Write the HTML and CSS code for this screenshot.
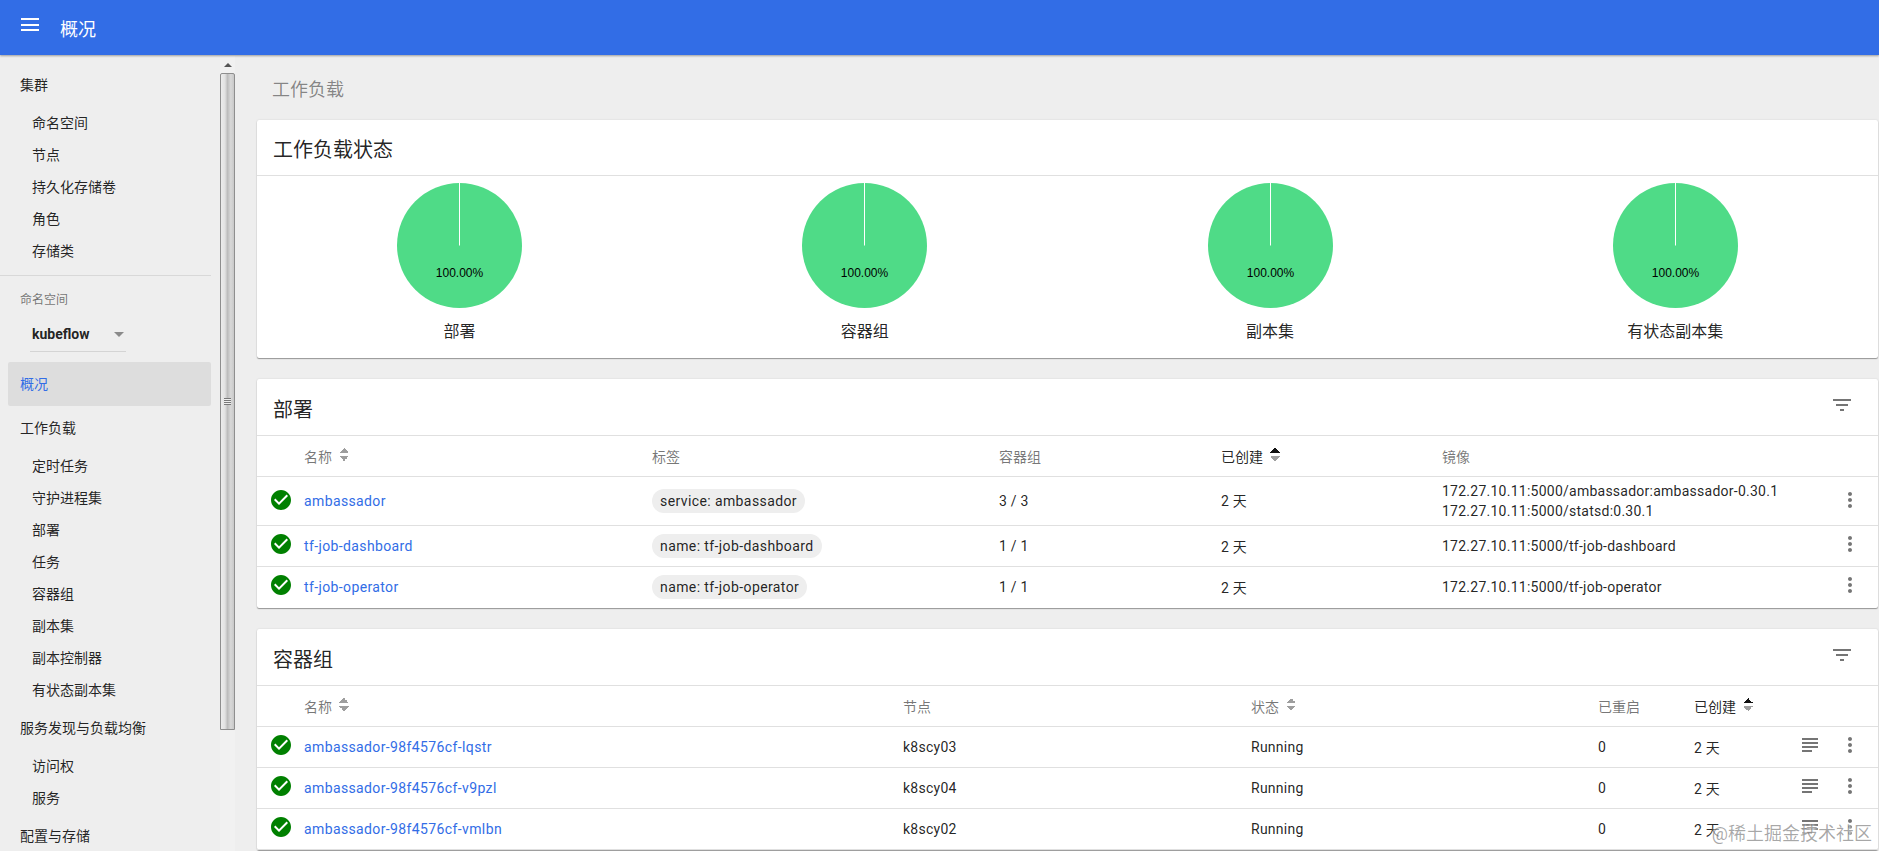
FILE: index.html
```html
<!DOCTYPE html>
<html lang="en">
<head>
  <meta charset="UTF-8" />
  <title>概况 - Kubernetes Dashboard</title>
  <link rel="stylesheet" href="styles.css">
</head>
<body>

<svg class="icon-defs" width="0" height="0">
  <symbol id="i-check" viewBox="0 0 24 24"><path d="M12 2C6.48 2 2 6.48 2 12s4.48 10 10 10 10-4.48 10-10S17.52 2 12 2zm-2 15l-5-5 1.41-1.41L10 14.17l7.59-7.59L19 8l-9 9z"/></symbol>
  <symbol id="i-more" viewBox="0 0 24 24"><path d="M12 8c1.1 0 2-.9 2-2s-.9-2-2-2-2 .9-2 2 .9 2 2 2zm0 2c-1.1 0-2 .9-2 2s.9 2 2 2 2-.9 2-2-.9-2-2-2zm0 6c-1.1 0-2 .9-2 2s.9 2 2 2 2-.9 2-2-.9-2-2-2z"/></symbol>
  <symbol id="i-filter" viewBox="0 0 24 24"><path d="M10 18h4v-2h-4v2zM3 6v2h18V6H3zm3 7h12v-2H6v2z"/></symbol>
  <symbol id="i-logs" viewBox="0 0 24 24"><path d="M14 17H4v2h10v-2zm6-8H4v2h16V9zM4 15h16v-2H4v2zM4 5v2h16V5H4z"/></symbol>
  <symbol id="i-pie" viewBox="0 0 125 125">
    <circle cx="62.5" cy="62.5" r="62.5" fill="#4fdb87"/>
    <rect x="62" y="0" width="1" height="62.5" fill="#fff"/>
  </symbol>
</svg>

<header class="toolbar">
  <button class="menu-btn"><span></span><span></span><span></span></button>
  <h1>概况</h1>
</header>

<div class="shell">
  <nav class="sidebar">
    <div class="nav-head">集群</div>
    <a class="nav-item">命名空间</a>
    <a class="nav-item">节点</a>
    <a class="nav-item">持久化存储卷</a>
    <a class="nav-item">角色</a>
    <a class="nav-item">存储类</a>

    <hr class="nav-divider">
    <div class="ns-label">命名空间</div>
    <div class="ns-select"><b>kubeflow</b><i class="ns-arrow"></i></div>

    <div class="nav-head nav-active">概况</div>

    <div class="nav-head">工作负载</div>
    <a class="nav-item">定时任务</a>
    <a class="nav-item">守护进程集</a>
    <a class="nav-item">部署</a>
    <a class="nav-item">任务</a>
    <a class="nav-item">容器组</a>
    <a class="nav-item">副本集</a>
    <a class="nav-item">副本控制器</a>
    <a class="nav-item">有状态副本集</a>

    <div class="nav-head">服务发现与负载均衡</div>
    <a class="nav-item">访问权</a>
    <a class="nav-item">服务</a>

    <div class="nav-head">配置与存储</div>
  </nav>

  <div class="scrollbar">
    <div class="scroll-up"><i></i></div>
    <div class="scroll-thumb"><i></i></div>
  </div>

  <main class="content">
    <div class="page-title">工作负载</div>

    <section class="card">
      <div class="card-head"><h2>工作负载状态</h2></div>
      <div class="pies">
        <div class="pie">
          <svg width="125" height="125"><use href="#i-pie"/><text x="62.5" y="94" text-anchor="middle">100.00%</text></svg>
          <div class="pie-label">部署</div>
        </div>
        <div class="pie">
          <svg width="125" height="125"><use href="#i-pie"/><text x="62.5" y="94" text-anchor="middle">100.00%</text></svg>
          <div class="pie-label">容器组</div>
        </div>
        <div class="pie">
          <svg width="125" height="125"><use href="#i-pie"/><text x="62.5" y="94" text-anchor="middle">100.00%</text></svg>
          <div class="pie-label">副本集</div>
        </div>
        <div class="pie">
          <svg width="125" height="125"><use href="#i-pie"/><text x="62.5" y="94" text-anchor="middle">100.00%</text></svg>
          <div class="pie-label">有状态副本集</div>
        </div>
      </div>
    </section>

    <section class="card">
      <div class="card-head card-head-list">
        <h2>部署</h2>
        <svg class="icon filter-icon"><use href="#i-filter"/></svg>
      </div>
      <table class="list">
        <colgroup>
          <col class="c-status"><col class="c-348"><col class="c-347"><col class="c-222"><col class="c-221"><col><col class="c-actions-one">
        </colgroup>
        <thead>
          <tr>
            <th></th>
            <th>名称 <span class="sort"></span></th>
            <th>标签</th>
            <th>容器组</th>
            <th class="sorted">已创建 <span class="sort sort-active"></span></th>
            <th>镜像</th>
            <th></th>
          </tr>
        </thead>
        <tbody>
          <tr class="tall">
            <td><svg class="icon check"><use href="#i-check"/></svg></td>
            <td><a>ambassador</a></td>
            <td><span class="chip">service: ambassador</span></td>
            <td>3 / 3</td>
            <td>2 天</td>
            <td>172.27.10.11:5000/ambassador:ambassador-0.30.1<br>172.27.10.11:5000/statsd:0.30.1</td>
            <td class="actions"><svg class="icon"><use href="#i-more"/></svg></td>
          </tr>
          <tr>
            <td><svg class="icon check"><use href="#i-check"/></svg></td>
            <td><a>tf-job-dashboard</a></td>
            <td><span class="chip">name: tf-job-dashboard</span></td>
            <td>1 / 1</td>
            <td>2 天</td>
            <td>172.27.10.11:5000/tf-job-dashboard</td>
            <td class="actions"><svg class="icon"><use href="#i-more"/></svg></td>
          </tr>
          <tr>
            <td><svg class="icon check"><use href="#i-check"/></svg></td>
            <td><a>tf-job-operator</a></td>
            <td><span class="chip">name: tf-job-operator</span></td>
            <td>1 / 1</td>
            <td>2 天</td>
            <td>172.27.10.11:5000/tf-job-operator</td>
            <td class="actions"><svg class="icon"><use href="#i-more"/></svg></td>
          </tr>
        </tbody>
      </table>
    </section>

    <section class="card">
      <div class="card-head card-head-list">
        <h2>容器组</h2>
        <svg class="icon filter-icon"><use href="#i-filter"/></svg>
      </div>
      <table class="list list-pods">
        <colgroup>
          <col class="c-status"><col class="c-599"><col class="c-348"><col class="c-347"><col class="c-96"><col><col class="c-actions-two">
        </colgroup>
        <thead>
          <tr>
            <th></th>
            <th>名称 <span class="sort"></span></th>
            <th>节点</th>
            <th>状态 <span class="sort"></span></th>
            <th>已重启</th>
            <th class="sorted">已创建 <span class="sort sort-active"></span></th>
            <th></th>
          </tr>
        </thead>
        <tbody>
          <tr>
            <td><svg class="icon check"><use href="#i-check"/></svg></td>
            <td><a>ambassador-98f4576cf-lqstr</a></td>
            <td>k8scy03</td>
            <td>Running</td>
            <td>0</td>
            <td>2 天</td>
            <td class="actions"><svg class="icon"><use href="#i-logs"/></svg><svg class="icon"><use href="#i-more"/></svg></td>
          </tr>
          <tr>
            <td><svg class="icon check"><use href="#i-check"/></svg></td>
            <td><a>ambassador-98f4576cf-v9pzl</a></td>
            <td>k8scy04</td>
            <td>Running</td>
            <td>0</td>
            <td>2 天</td>
            <td class="actions"><svg class="icon"><use href="#i-logs"/></svg><svg class="icon"><use href="#i-more"/></svg></td>
          </tr>
          <tr>
            <td><svg class="icon check"><use href="#i-check"/></svg></td>
            <td><a>ambassador-98f4576cf-vmlbn</a></td>
            <td>k8scy02</td>
            <td>Running</td>
            <td>0</td>
            <td>2 天</td>
            <td class="actions"><svg class="icon"><use href="#i-logs"/></svg><svg class="icon"><use href="#i-more"/></svg></td>
          </tr>
        </tbody>
      </table>
    </section>
  </main>
</div>

<div class="watermark">@稀土掘金技术社区</div>

</body>
</html>
```

FILE: styles.css
```css
html, body {
  height: 100%;
}

body {
  margin: 0;
  display: flex;
  flex-direction: column;
  overflow: hidden;
  background: #eee;
  color: rgba(0,0,0,0.87);
  font-family: Roboto, "Noto Sans CJK SC", sans-serif;
  font-size: 14px;
}

.icon-defs {
  position: absolute;
}

/* top bar */
.toolbar {
  flex: none;
  height: 55px;
  display: flex;
  align-items: center;
  background: #326de6;
  color: white;
  box-shadow: 0 1px 2px rgba(0,0,0,0.35);
  position: relative;
  z-index: 2;
}

.toolbar h1 {
  margin: 0 0 0 21px;
  font-size: 18px;
  font-weight: 400;
}

.menu-btn {
  display: flex;
  flex-direction: column;
  gap: 3.5px;
  width: 18px;
  margin: -6px 0 0 21px;
  padding: 0;
  border: none;
  background: none;
}

.menu-btn span {
  height: 2px;
  background: white;
}

.shell {
  flex: 1;
  min-height: 0;
  display: flex;
  margin-top: 1px;
}

/* side navigation */
.sidebar {
  flex: none;
  width: 220px;
  padding-top: 7px;
  overflow: hidden;
  box-sizing: border-box;
}

.nav-head {
  height: 44px;
  line-height: 44px;
  margin-right: 9px;
  padding-left: 20px;
}

.nav-item {
  display: block;
  height: 32px;
  line-height: 32px;
  padding-left: 32px;
}

.nav-divider {
  height: 1px;
  margin: 8px 9px 0 0;
  border: none;
  background: #d8d8d8;
}

.ns-label {
  margin: 15px 0 0 20px;
  height: 18px;
  line-height: 18px;
  font-size: 12px;
  color: rgba(0,0,0,0.54);
}

.ns-select {
  display: flex;
  align-items: center;
  justify-content: space-between;
  box-sizing: border-box;
  width: 96px;
  height: 35px;
  margin: 8px 0 10px 30px;
  padding: 0 2px;
  border-bottom: 1px solid #d4d4d4;
}

.ns-arrow {
  width: 0;
  height: 0;
  border: 5px solid transparent;
  border-top-color: #8a8a8a;
  border-bottom: none;
}

.nav-active {
  margin-left: 8px;
  padding-left: 12px;
  background: #ddd;
  border-radius: 2px;
  color: #326de6;
}

/* fake windows scrollbar */
.scrollbar {
  flex: none;
  width: 15px;
  background: #f1f1f1;
}

.scroll-up {
  height: 17px;
  display: flex;
  align-items: center;
  justify-content: center;
}

.scroll-up i {
  width: 0;
  height: 0;
  border: 4px solid transparent;
  border-bottom: 4px solid #555;
  border-top: none;
}

.scroll-thumb {
  height: 655px;
  display: flex;
  align-items: center;
  justify-content: center;
  border: 1px solid #8e8e8e;
  border-radius: 2px 2px 0 0;
  box-sizing: content-box;
  width: 13px;
  background: linear-gradient(to right, #ececec 0%, #e2e2e2 30%, #bdbdbd 50%, #d8d8d8 75%, #c8c8c8 100%);
}

.scroll-thumb i {
  width: 7px;
  height: 5px;
  margin-top: -1px;
  border-top: 1px solid #777;
  border-bottom: 1px solid #777;
  background: linear-gradient(#eee 0 1px, #777 1px 2px, #eee 2px 3px, #777 3px 4px, #eee 4px);
}

/* main column */
.content {
  flex: 1;
  min-width: 0;
  padding: 0 1px 0 22px;
  overflow: hidden;
}

.page-title {
  height: 24px;
  line-height: 24px;
  margin: 22px 0 18px 15px;
  font-size: 18px;
  color: rgba(0,0,0,0.45);
}

.card {
  margin-bottom: 21px;
  background: white;
  border-radius: 2px;
  box-shadow: 0 1px 1px rgba(0,0,0,0.35), 0 0 2px rgba(0,0,0,0.12);
}

.card-head {
  box-sizing: border-box;
  height: 56px;
  display: flex;
  align-items: center;
  justify-content: space-between;
  padding: 0 24px 0 16px;
  border-bottom: 1px solid #e0e0e0;
}

.card-head-list {
  height: 57px;
}

.card-head h2 {
  margin: 2px 0 0;
  font-size: 20px;
  font-weight: 400;
}

.filter-icon {
  margin-top: -4px;
}

.icon {
  width: 24px;
  height: 24px;
  fill: rgba(0,0,0,0.54);
  display: inline-block;
  vertical-align: middle;
}

/* status pies */
.pies {
  display: grid;
  grid-template-columns: repeat(4, 1fr);
  height: 182px;
}

.pie {
  display: flex;
  flex-direction: column;
  align-items: center;
  padding-top: 7px;
}

.pie svg {
  display: block;
}

.pie text {
  font-family: "Liberation Sans", Arial, sans-serif;
  font-size: 12px;
  fill: #000;
}

.pie-label {
  margin-top: 12px;
  font-size: 16px;
  line-height: 24px;
}

/* tables */
.list {
  width: 100%;
  table-layout: fixed;
  border-collapse: separate;
  border-spacing: 0;
}

.c-status { width: 47px; }
.c-96 { width: 96px; }
.c-221 { width: 221px; }
.c-222 { width: 222px; }
.c-347 { width: 347px; }
.c-348 { width: 348px; }
.c-599 { width: 599px; }
.c-actions-one { width: 58px; }
.c-actions-two { width: 98px; }

.list th,
.list td {
  padding: 0;
  height: 40px;
  border-bottom: 1px solid #e0e0e0;
  text-align: left;
  font-weight: 400;
  white-space: nowrap;
}

.list td {
  letter-spacing: 0.25px;
}

.list th {
  color: rgba(0,0,0,0.54);
}

.list th.sorted {
  color: rgba(0,0,0,0.87);
}

.list tbody tr:last-child td {
  border-bottom-color: transparent;
}

.list-pods tbody tr:last-child td {
  border-bottom-color: #e0e0e0;
}

.list tr.tall td {
  height: 48px;
  line-height: 20px;
}

.list a {
  color: #326de6;
  letter-spacing: 0.38px;
}

.sort {
  display: inline-block;
  vertical-align: 1px;
  width: 10px;
  height: 13px;
  margin-left: 4px;
  background:
    linear-gradient(to bottom right, transparent 50%, #9e9e9e 50%) 0 0 / 5px 5px no-repeat,
    linear-gradient(to bottom left, transparent 50%, #9e9e9e 50%) 5px 0 / 5px 5px no-repeat,
    linear-gradient(to top right, transparent 50%, #9e9e9e 50%) 0 8px / 5px 5px no-repeat,
    linear-gradient(to top left, transparent 50%, #9e9e9e 50%) 5px 8px / 5px 5px no-repeat;
}

.sort-active {
  background:
    linear-gradient(to bottom right, transparent 50%, #111 50%) 0 0 / 5px 5px no-repeat,
    linear-gradient(to bottom left, transparent 50%, #111 50%) 5px 0 / 5px 5px no-repeat,
    linear-gradient(to top right, transparent 50%, #9e9e9e 50%) 0 8px / 5px 5px no-repeat,
    linear-gradient(to top left, transparent 50%, #9e9e9e 50%) 5px 8px / 5px 5px no-repeat;
}

.check {
  fill: #008000;
  margin: -4px 0 0 12px;
}

.actions {
  text-align: right !important;
  padding-right: 16px !important;
}

.actions .icon {
  margin-top: -4px;
}

.actions .icon + .icon {
  margin-left: 16px;
}

.chip {
  display: inline-block;
  height: 24px;
  line-height: 24px;
  padding: 0 8px;
  border-radius: 12px;
  background: #eee;
  letter-spacing: 0.4px;
}

.watermark {
  position: absolute;
  right: 7px;
  bottom: 5px;
  font-size: 18px;
  line-height: 24px;
  color: rgba(0,0,0,0.35);
  text-shadow: 0 0 3px white, 0 0 3px white;
}
```
